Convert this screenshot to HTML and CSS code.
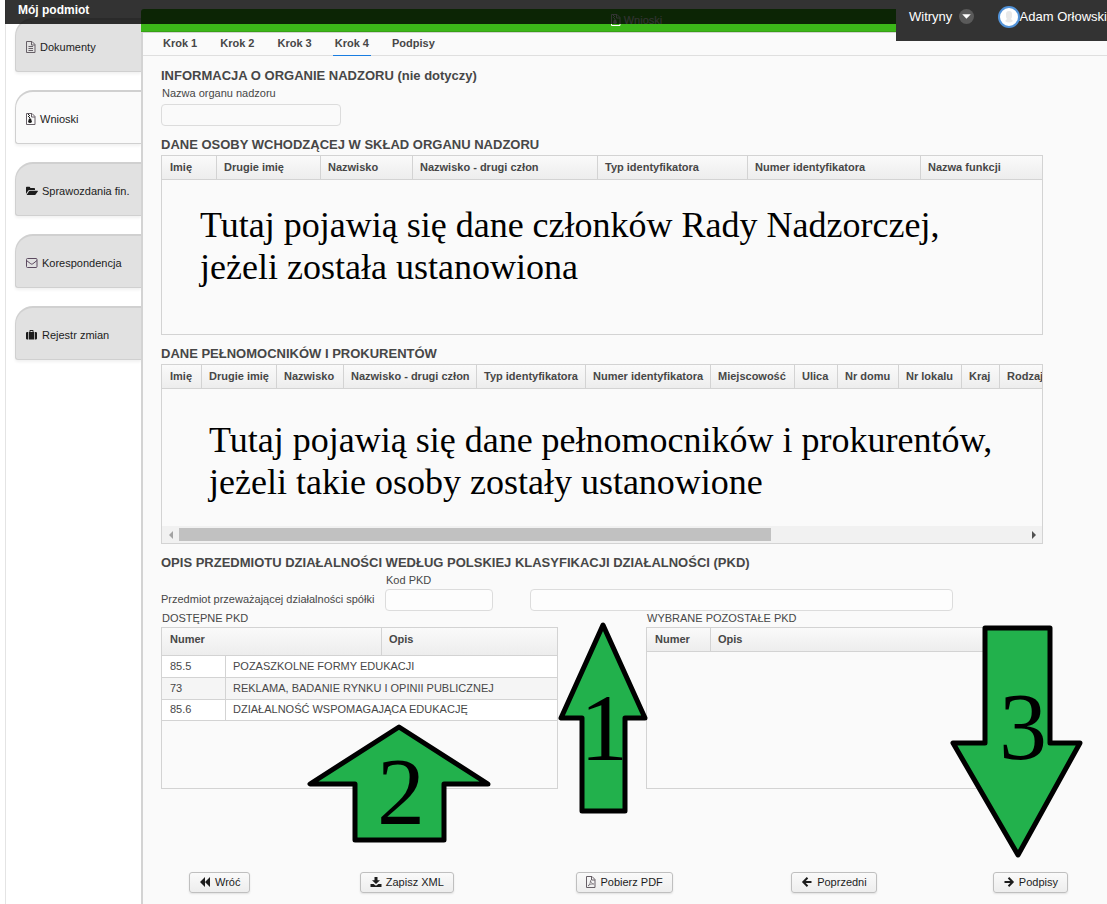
FILE: index.html
```html
<!DOCTYPE html>
<html lang="pl">
<head>
    <meta charset="UTF-8">
    <title>Mój podmiot - Wnioski</title>
    <link rel="stylesheet" href="styles.css">
</head>
<body>

    <svg class="sprite" aria-hidden="true">
        <symbol id="i-file" viewBox="1 0 10 12">
            <path d="M1.5.5h5.500l3 3v8h-8.500zM6.500.500v3.500h3.500M3.500 5.500h4.500M3.500 7.500h4.500M3.500 9.500h4.500" fill="none" stroke="currentColor"/>
        </symbol>
        <symbol id="i-zip" viewBox="1 0 10 12">
            <path d="M1.500.500h5.500l3 3v8h-8.500zM6.500.500v3.500h3.500" fill="none" stroke="currentColor"/>
            <path d="M3 1h1v1h-1zM4 2h1v1h-1zM3 3h1v1h-1zM4 4h1v1h-1zM4 5.500h2l1 3.500q-2 2-4 0z" fill="#1c1c1c"/>
        </symbol>
        <symbol id="i-zip-light" viewBox="1 0 10 12">
            <path d="M1.500.500h5.500l3 3v8h-8.500zM6.500.500v3.500h3.500" fill="none" stroke="currentColor"/>
            <path d="M3 1h1v1h-1zM4 2h1v1h-1zM3 3h1v1h-1zM4 4h1v1h-1zM4 5.500h2l1 3.500q-2 2-4 0z" fill="currentColor"/>
        </symbol>
        <symbol id="i-pdf" viewBox="1 0 10 12">
            <path d="M1.500.500h5.500l3 3v8h-8.500zM6.500.500v3.500h3.500" fill="none" stroke="currentColor"/>
            <path d="M3 10c1.500-1 2.600-3.500 2.500-5.500c.3 2.200 1.500 3.500 3.300 3.500c-2-.3-4 .2-5.800 2z" fill="none" stroke="currentColor" stroke-width=".7"/>
        </symbol>
        <symbol id="i-folder" viewBox="0 0 12 12">
            <path d="M0 9V2.500q0-.8.8-.8h2.600q.8 0 .8.800v.400h4q.8 0 .8.800v1.300H3.500q-.8 0-1.200.6z" fill="currentColor"/>
            <path d="M.6 10l2.400-3.700q.3-.5.9-.5h7.600q.7 0 .3.600l-2.200 3.100q-.4.500-1 .5z" fill="currentColor"/>
        </symbol>
        <symbol id="i-mail" viewBox="0 0 12 12">
            <path d="M.500 2.500q0-1 1-1h8.500q1 0 1 1v7q0 1-1 1h-8.500q-1 0-1-1zM.500 3.500l4.300 3.300q1 .7 2 0L11 3.500" fill="none" stroke="currentColor"/>
        </symbol>
        <symbol id="i-case" viewBox="0 0 12 12">
            <path d="M2 3v7.500H1.200Q0 10.500 0 9.500V4q0-1 1.200-1zM2.700 3h.8V1.700q0-.7.7-.7h2.600q.7 0 .7.700V3h.8v7.500H2.700zM4.400 3h2.200V1.900H4.400zM9 3h.8Q11 3 11 4v5.500q0 1-1.200 1H9z" fill="currentColor" fill-rule="evenodd"/>
        </symbol>
        <symbol id="i-back" viewBox="0 0 12 12">
            <path d="M6 1v10L1 6zM11 1v10L6 6z" fill="currentColor"/>
        </symbol>
        <symbol id="i-save" viewBox="0 0 12 12">
            <path d="M4.500 1h3v3.200H10L6 8 2 4.200h2.500zM.500 8H3.600L6 9.700 8.400 8h3.100v3H.500z" fill="currentColor"/>
        </symbol>
        <symbol id="i-left" viewBox="0 0 12 12">
            <path d="M6.500 1.800L2.300 6l4.200 4.200M2.500 6h8" fill="none" stroke="currentColor" stroke-width="2"/>
        </symbol>
        <symbol id="i-right" viewBox="0 0 12 12">
            <path d="M5.500 1.800L9.700 6l-4.200 4.200M9.500 6H1.500" fill="none" stroke="currentColor" stroke-width="2"/>
        </symbol>
    </svg>

    <header class="topbar">
        <h1>Mój podmiot</h1>
        <div class="user-menu">
            <a href="#" class="sites">Witryny
                <svg class="caret" viewBox="0 0 14 14"><circle cx="7" cy="7" r="7" fill="#5a5a5a"/><path d="M3 5h8L7 9z" fill="#fff"/></svg>
            </a>
            <a href="#" class="user">
                <svg class="avatar" viewBox="0 0 22 22"><circle cx="11" cy="11" r="10" fill="#fff" stroke="#5293d9" stroke-width="2"/><path d="M8 8q0-3 3-3t3 3v2q0 2-1 3l2 2q-4 3-8 0l2-2q-1-1-1-3z" fill="#e8e8e8"/></svg>Adam Orłowski
            </a>
        </div>
    </header>

    <div class="page">
        <nav class="sidebar">
            <a href="#"><svg class="icon page-icon"><use href="#i-file"/></svg>Dokumenty</a>
            <a href="#" class="active"><svg class="icon page-icon"><use href="#i-zip"/></svg>Wnioski</a>
            <a href="#"><svg class="icon"><use href="#i-folder"/></svg>Sprawozdania fin.</a>
            <a href="#"><svg class="icon mail-icon"><use href="#i-mail"/></svg>Korespondencja</a>
            <a href="#"><svg class="icon"><use href="#i-case"/></svg>Rejestr zmian</a>
        </nav>

        <main class="main">
            <div class="caption"><svg class="icon"><use href="#i-zip-light"/></svg>Wnioski</div>

            <div class="panel">
                <nav class="steps">
                    <a href="#">Krok 1</a>
                    <a href="#">Krok 2</a>
                    <a href="#">Krok 3</a>
                    <a href="#" class="current">Krok 4</a>
                    <a href="#">Podpisy</a>
                </nav>

                <form class="form">
                    <h2>INFORMACJA O ORGANIE NADZORU (nie dotyczy)</h2>
                    <label for="organ">Nazwa organu nadzoru</label>
                    <input type="text" id="organ" class="organ">

                    <h2>DANE OSOBY WCHODZĄCEJ W SKŁAD ORGANU NADZORU</h2>
                    <div class="grid people">
                        <table>
                            <colgroup>
                                <col class="w55"><col class="w104"><col class="w92"><col class="w185"><col class="w150"><col class="w173"><col>
                            </colgroup>
                            <thead>
                                <tr>
                                    <th>Imię</th>
                                    <th>Drugie imię</th>
                                    <th>Nazwisko</th>
                                    <th>Nazwisko - drugi człon</th>
                                    <th>Typ identyfikatora</th>
                                    <th>Numer identyfikatora</th>
                                    <th>Nazwa funkcji</th>
                                </tr>
                            </thead>
                        </table>
                        <p class="note">Tutaj pojawią się dane członków Rady Nadzorczej,<br>jeżeli została ustanowiona</p>
                    </div>

                    <h2>DANE PEŁNOMOCNIKÓW I PROKURENTÓW</h2>
                    <div class="grid people">
                        <table class="wide">
                            <colgroup>
                                <col class="w40"><col class="w75"><col class="w67"><col class="w133"><col class="w109"><col class="w125"><col class="w84"><col class="w43"><col class="w61"><col class="w63"><col class="w38"><col>
                            </colgroup>
                            <thead>
                                <tr>
                                    <th>Imię</th>
                                    <th>Drugie imię</th>
                                    <th>Nazwisko</th>
                                    <th>Nazwisko - drugi człon</th>
                                    <th>Typ identyfikatora</th>
                                    <th>Numer identyfikatora</th>
                                    <th>Miejscowość</th>
                                    <th>Ulica</th>
                                    <th>Nr domu</th>
                                    <th>Nr lokalu</th>
                                    <th>Kraj</th>
                                    <th>Rodzaj</th>
                                </tr>
                            </thead>
                        </table>
                        <p class="note note-low">Tutaj pojawią się dane pełnomocników i prokurentów,<br>jeżeli takie osoby zostały ustanowione</p>
                        <div class="scroll">
                            <button type="button" class="scroll-btn" aria-label="W lewo"><svg viewBox="0 0 4 8"><path d="M4 0v8L0 4z" fill="#a3a3a3"/></svg></button>
                            <div class="track"><div class="thumb"></div></div>
                            <button type="button" class="scroll-btn" aria-label="W prawo"><svg viewBox="0 0 4 8"><path d="M0 0v8l4-4z" fill="#505050"/></svg></button>
                        </div>
                    </div>

                    <h2>OPIS PRZEDMIOTU DZIAŁALNOŚCI WEDŁUG POLSKIEJ KLASYFIKACJI DZIAŁALNOŚCI (PKD)</h2>
                    <div class="main-pkd">
                        <label for="kod" class="kod-label">Kod PKD</label>
                        <label for="opis" class="row-label">Przedmiot przeważającej działalności spółki</label>
                        <input type="text" id="kod" class="kod">
                        <input type="text" id="opis">
                    </div>

                    <div class="pkd">
                        <div>
                            <div class="pkd-title">DOSTĘPNE PKD</div>
                            <div class="grid">
                                <table class="available">
                                    <colgroup><col class="w64"><col class="w156"><col></colgroup>
                                    <thead>
                                        <tr><th colspan="2">Numer</th><th>Opis</th></tr>
                                    </thead>
                                    <tbody>
                                        <tr><td>85.5</td><td colspan="2">POZASZKOLNE FORMY EDUKACJI</td></tr>
                                        <tr><td>73</td><td colspan="2">REKLAMA, BADANIE RYNKU I OPINII PUBLICZNEJ</td></tr>
                                        <tr><td>85.6</td><td colspan="2">DZIAŁALNOŚĆ WSPOMAGAJĄCA EDUKACJĘ</td></tr>
                                    </tbody>
                                </table>
                            </div>
                        </div>
                        <div>
                            <div class="pkd-title">WYBRANE POZOSTAŁE PKD</div>
                            <div class="grid">
                                <table>
                                    <colgroup><col class="w64"><col></colgroup>
                                    <thead>
                                        <tr><th>Numer</th><th>Opis</th></tr>
                                    </thead>
                                </table>
                            </div>
                        </div>

                        <!-- numbered hints lying over the form -->
                        <svg class="arrow arrow-1" viewBox="0 0 94 194">
                            <path d="M47 5L5 98h21v93h43V98h20z"/>
                            <text x="24" y="140">1</text>
                        </svg>
                        <svg class="arrow arrow-2" viewBox="0 0 186 120">
                            <path d="M93 4L4 61h45v56h89V61h44z"/>
                            <text x="71" y="101">2</text>
                        </svg>
                        <svg class="arrow arrow-3" viewBox="0 0 136 236">
                            <path d="M36 4h65v115h30L69 231 4 119h32z"/>
                            <text x="50" y="135">3</text>
                        </svg>
                    </div>
                </form>

                <div class="buttons">
                    <div><button type="button"><svg class="icon"><use href="#i-back"/></svg>Wróć</button></div>
                    <div><button type="button"><svg class="icon"><use href="#i-save"/></svg>Zapisz XML</button></div>
                    <div><button type="button"><svg class="icon page-icon"><use href="#i-pdf"/></svg>Pobierz PDF</button></div>
                    <div><button type="button"><svg class="icon"><use href="#i-left"/></svg>Poprzedni</button></div>
                    <div><button type="button"><svg class="icon"><use href="#i-right"/></svg>Podpisy</button></div>
                </div>
            </div>
        </main>
    </div>

</body>
</html>
```
FILE: styles.css
```css
* {
    box-sizing: border-box;
}
body {
    margin: 0;
    background: #fff;
    color: #474747;
    font-family: "Liberation Sans", Arial, sans-serif;
    font-size: 11px;
    line-height: 14px;
}
a {
    color: inherit;
    text-decoration: none;
}
.sprite {
    display: none;
}
.icon {
    width: 12px;
    height: 12px;
    flex: none;
}
.page-icon {
    width: 10px;
    color: #665f66;
}
.mail-icon {
    color: #5c4a60;
}

/* top bar, see-through over the page */
.topbar {
    position: absolute;
    top: 0;
    left: 5px;
    right: 0;
    z-index: 5;
    height: 24px;
    padding-left: 13px;
    background: rgba(0, 0, 0, 0.8);
    color: #fff;
    font-size: 13px;
}
.topbar h1 {
    margin: 0;
    font-size: 12px;
    line-height: 20px;
}
.user-menu {
    position: absolute;
    top: 0;
    right: 0;
    display: flex;
    align-items: center;
    justify-content: space-between;
    width: 211px;
    height: 41px;
    padding: 0 0 8px 13px;
    background: #333;
}
.sites, .user {
    display: flex;
    align-items: center;
    white-space: nowrap;
}
.caret {
    width: 15px;
    height: 15px;
    margin-left: 7px;
}
.avatar {
    width: 22px;
    height: 22px;
}

.page {
    display: flex;
    min-height: 100vh;
    margin-left: 5px;
    border-left: 1px solid #e4e4e4;
}

.sidebar {
    display: flex;
    flex-direction: column;
    gap: 18px;
    width: 135px;
    padding: 18px 0 0 9px;
}
.sidebar a {
    display: flex;
    align-items: center;
    gap: 4px;
    height: 54px;
    padding: 2px 0 0 10px;
    border: 1px solid #d0d0d0;
    border-top-width: 2px;
    border-right: 0;
    border-radius: 18px 0 0 3px;
    background: #e1e1e1;
    box-shadow: 0 2px 3px rgba(0, 0, 0, 0.06);
    color: #1c1c1c;
    white-space: nowrap;
}
.sidebar a.active {
    background: #fafafa;
}

.main {
    flex: 1;
    display: flex;
    flex-direction: column;
    min-width: 0;
    padding-top: 9px;
}
.caption {
    display: flex;
    align-items: center;
    justify-content: center;
    gap: 2px;
    height: 23px;
    padding-left: 24px;
    border-bottom: 1px solid #37a115;
    border-radius: 3px 3px 0 0;
    background: #3cb719;
    color: #fff;
}
.panel {
    flex: 1;
    border-top: 1px solid #d3d3d3;
    border-left: 2px solid #d3d3d3;
    background: #fafafa;
}

.steps {
    display: flex;
    gap: 19px;
    height: 23px;
    padding-left: 18px;
    border-bottom: 1px solid #dfdfdf;
    font-weight: bold;
}
.steps a {
    height: 23px;
    padding: 0 2px;
    line-height: 21px;
}
.steps .current {
    border-bottom: 1px solid #197de1;
}

.form {
    padding: 11px 64px 0 18px;
}
.form h2 {
    margin: 10px 0 1px;
    font-size: 13px;
    line-height: 18px;
    white-space: nowrap;
}
.form h2:first-child {
    margin-top: 0;
}
.form label {
    display: block;
    padding-left: 1px;
}
.form input {
    display: block;
    width: 100%;
    height: 22px;
    border: 1px solid #dcdcdc;
    border-radius: 4px;
    background: #fdfdfd;
}
.form .organ {
    width: 180px;
    margin-top: 4px;
    background: #fafafa;
}

.grid {
    height: 162px;
    border: 1px solid #d3d3d3;
    overflow: hidden;
}
.people {
    display: flex;
    flex-direction: column;
    height: 180px;
}
.grid table {
    width: 100%;
    border-collapse: separate;
    border-spacing: 0;
    table-layout: fixed;
}
.grid .wide {
    width: 1264px;
}
.grid th {
    height: 24px;
    padding: 0 0 2px 7px;
    border-right: 1px solid #d3d3d3;
    border-bottom: 1px solid #d3d3d3;
    background: linear-gradient(#fafafa, #ededed);
    text-align: left;
    white-space: nowrap;
}
.grid th:first-child {
    padding-left: 8px;
}
.grid th:last-child {
    border-right: 0;
}
.grid td {
    height: 22px;
    padding: 0 0 2px 8px;
    border-bottom: 1px solid #d3d3d3;
    border-right: 1px solid #d3d3d3;
    background: #fff;
    white-space: nowrap;
}
.grid td:last-child {
    padding-left: 7px;
    border-right: 0;
}
.grid tr:nth-child(2) td {
    background: #f5f5f5;
}
.grid tr:last-child td {
    height: 21px;
}
.grid .available th {
    height: 28px;
    padding-bottom: 6px;
}
.w38 { width: 38px; }
.w40 { width: 40px; }
.w43 { width: 43px; }
.w55 { width: 55px; }
.w61 { width: 61px; }
.w63 { width: 63px; }
.w64 { width: 64px; }
.w67 { width: 67px; }
.w75 { width: 75px; }
.w84 { width: 84px; }
.w92 { width: 92px; }
.w104 { width: 104px; }
.w109 { width: 109px; }
.w125 { width: 125px; }
.w133 { width: 133px; }
.w150 { width: 150px; }
.w156 { width: 156px; }
.w173 { width: 173px; }
.w185 { width: 185px; }

.note {
    margin: 0;
    padding: 24px 0 0 38px;
    color: #000;
    font-family: "Liberation Serif", "Times New Roman", serif;
    font-size: 36px;
    line-height: 42px;
    white-space: nowrap;
}
.note-low {
    padding: 30px 0 0 47px;
}

.scroll {
    display: flex;
    height: 17px;
    margin-top: auto;
    background: #f1f1f1;
}
.scroll-btn {
    display: flex;
    align-items: center;
    justify-content: center;
    width: 17px;
    padding: 0;
    border: 0;
    background: none;
}
.scroll-btn svg {
    width: 4px;
    height: 8px;
}
.track {
    flex: 1;
    padding: 2px 0;
}
.thumb {
    width: 70%;
    height: 13px;
    background: #c1c1c1;
}

.main-pkd {
    display: grid;
    grid-template-columns: 224px 145px minmax(0, 423px);
    row-gap: 2px;
    align-items: center;
}
.kod-label {
    grid-column: 2 / 4;
}
.form .row-label {
    padding: 0 0 2px;
}
.form .kod {
    width: 108px;
}

.pkd {
    position: relative;
    display: grid;
    grid-template-columns: 1fr 1fr;
    gap: 88px;
}
.pkd-title {
    margin-bottom: 2px;
    padding-left: 1px;
}

.arrow {
    position: absolute;
    overflow: visible;
    fill: #22b14c;
    stroke: #000;
    stroke-width: 5px;
    stroke-linejoin: round;
}
.arrow text {
    fill: #000;
    stroke: none;
    font-family: "Liberation Serif", "Times New Roman", serif;
    font-size: 96px;
}
.arrow-1 {
    top: 9px;
    left: 395px;
    width: 94px;
    height: 194px;
}
.arrow-2 {
    top: 112px;
    left: 145px;
    width: 186px;
    height: 120px;
}
.arrow-3 {
    top: 13px;
    right: -42px;
    width: 136px;
    height: 236px;
}

.buttons {
    display: grid;
    grid-template-columns: 171fr 217fr 215fr 202fr auto;
    padding: 83px 39px 10px 46px;
}
.buttons button {
    display: flex;
    align-items: center;
    gap: 4px;
    height: 21px;
    padding: 0 9px 2px;
    border: 1px solid #bfbfbf;
    border-radius: 3px;
    background: linear-gradient(#fafafa, #ededed);
    box-shadow: 0 1px 2px rgba(0, 0, 0, 0.1);
    color: #1c1c1c;
    font: 11px "Liberation Sans", Arial, sans-serif;
    white-space: nowrap;
}
```
